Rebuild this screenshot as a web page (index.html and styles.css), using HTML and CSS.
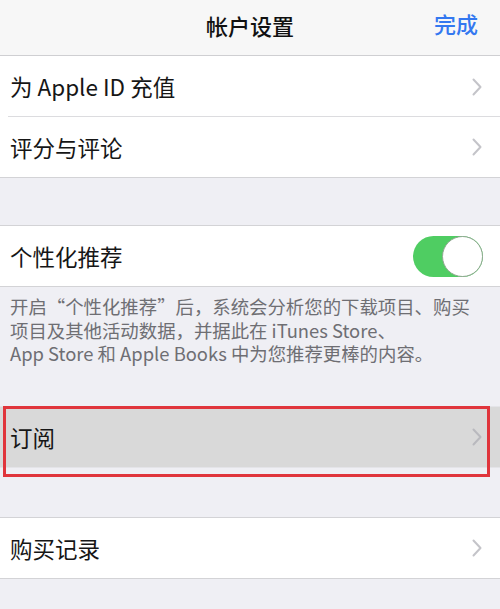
FILE: index.html
```html
<!DOCTYPE html>
<html lang="zh-CN">
<head>
<meta charset="utf-8">
<title>帐户设置</title>
<link rel="stylesheet" href="styles.css">
</head>
<body>
<header class="nav">
  <span class="nav-title">帐户设置</span>
  <span class="nav-done">完成</span>
</header>

<section class="group group-first">
  <div class="row row-sep">
    <span class="label">为 Apple ID 充值</span>
    <svg class="chev" viewBox="0 0 10 18" width="10" height="18"><path d="M1.5 1.5 L8.5 9 L1.5 16.5" fill="none" stroke="#c4c4c9" stroke-width="2" stroke-linecap="round" stroke-linejoin="round"/></svg>
  </div>
  <div class="row">
    <span class="label">评分与评论</span>
    <svg class="chev" viewBox="0 0 10 18" width="10" height="18"><path d="M1.5 1.5 L8.5 9 L1.5 16.5" fill="none" stroke="#c4c4c9" stroke-width="2" stroke-linecap="round" stroke-linejoin="round"/></svg>
  </div>
</section>

<section class="group group-toggle">
  <div class="row">
    <span class="label">个性化推荐</span>
    <span class="switch"><span class="knob"></span></span>
  </div>
</section>
<p class="footnote">开启“个性化推荐”后，系统会分析您的下载项目、购买项目及其他活动数据，并据此在 iTunes Store、<br>App Store 和 Apple Books 中为您推荐更棒的内容。</p>

<section class="group group-sub">
  <div class="row row-pressed">
    <span class="label">订阅</span>
    <svg class="chev" viewBox="0 0 10 18" width="10" height="18"><path d="M1.5 1.5 L8.5 9 L1.5 16.5" fill="none" stroke="#b9b9be" stroke-width="2" stroke-linecap="round" stroke-linejoin="round"/></svg>
  </div>
  <div class="highlight"></div>
</section>

<section class="group group-last">
  <div class="row">
    <span class="label">购买记录</span>
    <svg class="chev" viewBox="0 0 10 18" width="10" height="18"><path d="M1.5 1.5 L8.5 9 L1.5 16.5" fill="none" stroke="#c4c4c9" stroke-width="2" stroke-linecap="round" stroke-linejoin="round"/></svg>
  </div>
</section>
</body>
</html>
```
FILE: styles.css
```css
html, body {
  margin: 0;
  padding: 0;
}
body {
  width: 500px;
  height: 609px;
  overflow: hidden;
  background: #efeff4;
  font-family: "Noto Sans CJK SC", "Noto Sans", sans-serif;
  color: #111;
}
.nav {
  height: 55px;
  background: #f7f7f7;
  border-bottom: 1px solid #cfcfd2;
  display: flex;
  align-items: center;
  justify-content: center;
  position: relative;
}
.nav-title {
  font-size: 22px;
  font-weight: 500;
  line-height: 1;
  color: #111;
  margin-top: -6px;
}
.nav-done {
  position: absolute;
  right: 22px;
  top: 12px;
  font-size: 22px;
  line-height: 1;
  font-weight: 500;
  color: #3478f0;
}
.group {
  background: #fff;
  border-top: 1px solid #d3d3d6;
  border-bottom: 1px solid #d3d3d6;
}
.group-first {
  border-top: none;
}
.group-toggle {
  margin-top: 47px;
}
.group-sub {
  position: relative;
  border-top-color: #e4e4e8;
  border-bottom-color: #e4e4e8;
}
.group-last {
  margin-top: 49px;
}
.row {
  height: 60px;
  display: flex;
  align-items: center;
  justify-content: space-between;
  padding: 0 18px 0 10px;
  position: relative;
}
.row-sep::after {
  content: "";
  position: absolute;
  left: 8px;
  right: 0;
  bottom: 0;
  height: 1px;
  background: #dcdcdf;
}
.row-sep {
  height: 61px;
}
.label {
  font-size: 22.5px;
  line-height: 1;
  color: #161616;
}
.chev {
  display: block;
}
.switch {
  width: 70px;
  height: 41px;
  border-radius: 21px;
  background: #4fcd62;
  position: relative;
  margin-right: -1px;
}
.knob {
  position: absolute;
  right: 0;
  top: 0;
  width: 41px;
  height: 41px;
  box-sizing: border-box;
  border-radius: 50%;
  background: #fff;
  border: 1.5px solid #8fa890;
}
.footnote {
  margin: 0;
  padding: 8px 12px 0 10px;
  height: 119px;
  box-sizing: border-box;
  font-size: 18.4px;
  line-height: 23.5px;
  color: #6e6e73;
}
.row-pressed {
  background: #d9d9d9;
}
.highlight {
  position: absolute;
  left: 3px;
  top: -1px;
  width: 487px;
  height: 71px;
  box-sizing: border-box;
  border: 3px solid #e0353c;
}
```
